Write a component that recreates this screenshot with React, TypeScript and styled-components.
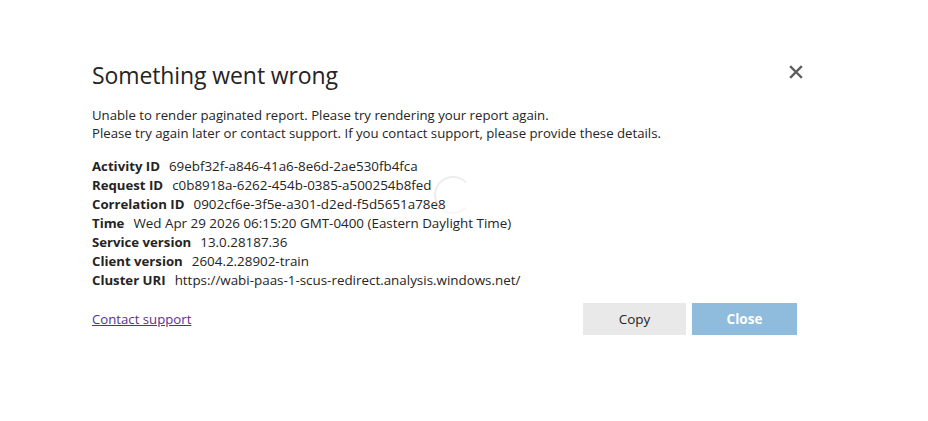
import React from "react";
import styled, { createGlobalStyle } from "styled-components";

const GlobalStyle = createGlobalStyle`
  html, body {
    margin: 0;
    padding: 0;
    background: #ffffff;
    font-family: "Open Sans", "Noto Sans", Arial, sans-serif;
    color: #252423;
  }
`;

const Page = styled.div`
  width: 928px;
  height: 421px;
  box-sizing: border-box;
  padding: 56px 131px 0 92px;
`;

const Dialog = styled.div`
  position: relative;
  display: flex;
  flex-direction: column;
`;

const Header = styled.div`
  display: flex;
  justify-content: space-between;
  align-items: flex-start;
`;

const Title = styled.h1`
  margin: 0;
  font-size: 23px;
  font-weight: 400;
  line-height: 38px;
  letter-spacing: -0.1px;
`;

const CloseX = styled.button`
  border: none;
  background: none;
  padding: 0;
  margin-top: 9px;
  margin-right: -6px;
  width: 14px;
  height: 14px;
  cursor: pointer;
  display: flex;
`;

const Message = styled.p`
  margin: 12px 0 0;
  font-size: 13.2px;
  line-height: 18px;
`;

const Details = styled.div`
  margin-top: 15px;
  display: flex;
  flex-direction: column;
`;

const Row = styled.div`
  font-size: 13.4px;
  line-height: 19px;
  white-space: nowrap;
`;

const Label = styled.span`
  font-weight: 700;
  font-size: 13.2px;
  margin-right: 9px;
`;

const Footer = styled.div`
  margin-top: 13px;
  display: flex;
  align-items: center;
  justify-content: space-between;
`;

const Link = styled.a`
  color: #5c2d91;
  font-size: 13.2px;
  text-decoration: underline;
  cursor: pointer;
`;

const Buttons = styled.div`
  display: flex;
  gap: 6px;
`;

const Button = styled.button<{ $primary?: boolean }>`
  height: 32px;
  width: ${(p) => (p.$primary ? "105px" : "103px")};
  border: none;
  font-family: inherit;
  font-size: 13.5px;
  font-weight: ${(p) => (p.$primary ? 700 : 400)};
  background: ${(p) => (p.$primary ? "#8fbbdd" : "#e9e9e9")};
  color: ${(p) => (p.$primary ? "#ffffff" : "#252423")};
  cursor: pointer;
`;

const Spinner = styled.div`
  position: absolute;
  left: 342px;
  top: 120px;
  width: 34px;
  height: 34px;
  border-radius: 50%;
  border: 2px solid rgba(200, 200, 200, 0.35);
  border-right-color: transparent;
  border-bottom-color: rgba(200, 200, 200, 0.15);
`;

const details: [string, string][] = [
  ["Activity ID", "69ebf32f-a846-41a6-8e6d-2ae530fb4fca"],
  ["Request ID", "c0b8918a-6262-454b-0385-a500254b8fed"],
  ["Correlation ID", "0902cf6e-3f5e-a301-d2ed-f5d5651a78e8"],
  ["Time", "Wed Apr 29 2026 06:15:20 GMT-0400 (Eastern Daylight Time)"],
  ["Service version", "13.0.28187.36"],
  ["Client version", "2604.2.28902-train"],
  ["Cluster URI", "https://wabi-paas-1-scus-redirect.analysis.windows.net/"],
];

const App = () => {
  return (
    <>
      <GlobalStyle />
      <Page>
        <Dialog>
          <Header>
            <Title>Something went wrong</Title>
            <CloseX aria-label="Close">
              <svg width="14" height="14" viewBox="0 0 14 14">
                <path
                  d="M2 2 L12 12 M12 2 L2 12"
                  stroke="#605e5c"
                  strokeWidth="2.4"
                  strokeLinecap="square"
                />
              </svg>
            </CloseX>
          </Header>
          <Message>
            Unable to render paginated report. Please try rendering your report again.
            <br />
            Please try again later or contact support. If you contact support, please provide these details.
          </Message>
          <Details>
            {details.map(([label, value]) => (
              <Row key={label}>
                <Label>{label}</Label>
                {value}
              </Row>
            ))}
          </Details>
          <Footer>
            <Link>Contact support</Link>
            <Buttons>
              <Button>Copy</Button>
              <Button $primary>Close</Button>
            </Buttons>
          </Footer>
          <Spinner />
        </Dialog>
      </Page>
    </>
  );
};

export default App;
